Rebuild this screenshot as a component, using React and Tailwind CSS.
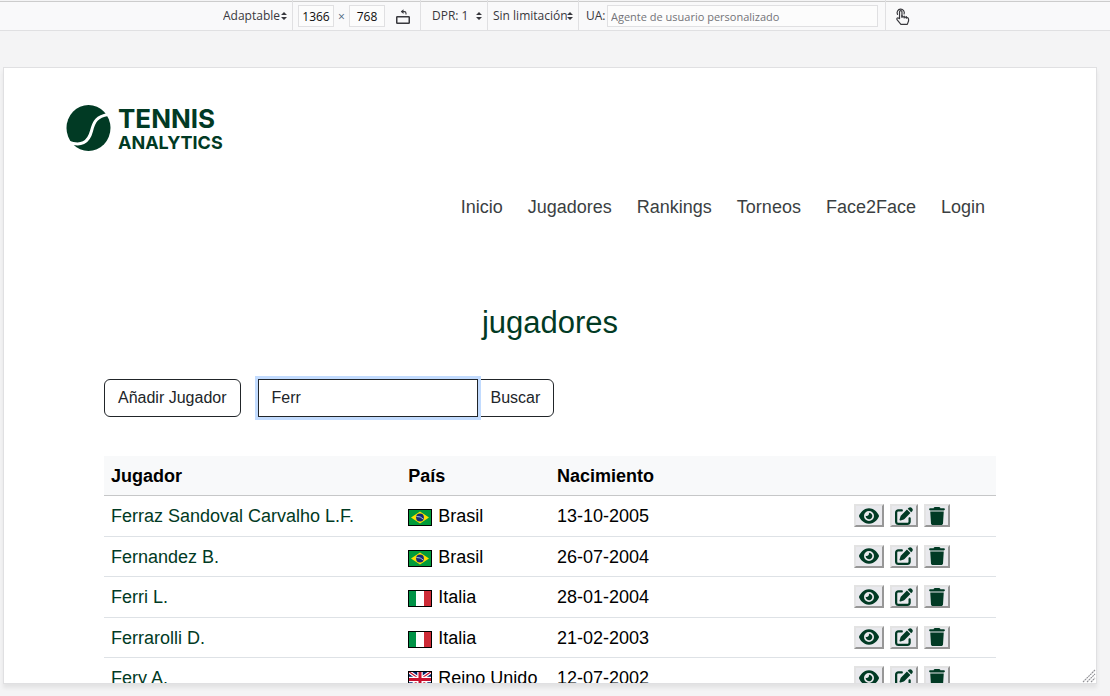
import { useState } from "react";
import { FaEye, FaPenToSquare, FaTrash } from "react-icons/fa6";

const players = [
  { name: "Ferraz Sandoval Carvalho L.F.", country: "Brasil", born: "13-10-2005" },
  { name: "Fernandez B.", country: "Brasil", born: "26-07-2004" },
  { name: "Ferri L.", country: "Italia", born: "28-01-2004" },
  { name: "Ferrarolli D.", country: "Italia", born: "21-02-2003" },
  { name: "Fery A.", country: "Reino Unido", born: "12-07-2002" },
];

const links = ["Inicio", "Jugadores", "Rankings", "Torneos", "Face2Face", "Login"];

function Arrows() {
  return (
    <svg viewBox="0 0 6 8" className="pointer-events-none h-2 w-1.5 shrink-0 fill-[#38383d]" aria-hidden="true">
      <path d="M3 0 6 3H0zM3 8 0 5h6z" />
    </svg>
  );
}

function ToolSelect({ label, options, className }) {
  return (
    <label className={`flex h-full items-center border-r border-[#e0e0e2] pt-[2px] ${className}`}>
      <select aria-label={label} className="min-w-0 flex-1 appearance-none bg-transparent outline-none">
        {options.map((o) => (
          <option key={o}>{o}</option>
        ))}
      </select>
      <Arrows />
    </label>
  );
}

function Toolbar() {
  return (
    <header className="flex h-[31px] shrink-0 items-center border-b border-[#e0e0e2] bg-[#f9f9fa] pl-[223px] font-['Open_Sans','Noto_Sans',sans-serif] text-[12px] text-[#38383d] shadow-[inset_0_1px_0_#f4f4f5,inset_0_2px_0_#cccccc]">
      <ToolSelect label="Dispositivo" options={["Adaptable"]} className="w-[70px] pr-[5px]" />
      <div className="flex h-full items-center border-r border-[#e0e0e2] pt-px pr-[9px] pl-[5px]">
        <input aria-label="Ancho" defaultValue="1366" className="h-[22px] w-9 border border-[#e0e0e2] bg-[#fcfcfc] pt-[2px] text-center text-[#0c0c0d] outline-none" />
        <span className="w-[15px] pt-[2px] text-center text-[#4a6480]">×</span>
        <input aria-label="Alto" defaultValue="768" className="h-[22px] w-9 border border-[#e0e0e2] bg-[#fcfcfc] pt-[2px] text-center text-[#0c0c0d] outline-none" />
        <button type="button" aria-label="Girar" className="ml-[10px] pt-[2px]">
          <svg viewBox="0 0 16 16" className="size-4" fill="none" stroke="#38383d">
            <rect x="1.75" y="7.75" width="12.5" height="6.500" rx="0.6" strokeWidth="1.5" />
            <path d="M11 5.500V4.200Q11 2.600 9.400 2.600H6.500" strokeWidth="1.1" />
            <path d="M8.500 .3 5.800 2.600 8.500 4.900z" fill="#38383d" stroke="none" />
          </svg>
        </button>
      </div>
      <ToolSelect label="Relación de píxeles" options={["DPR: 1"]} className="w-[67px] pr-[5px] pl-[11px]" />
      <ToolSelect label="Limitación de red" options={["Sin limitación"]} className="w-[91px] pr-[5px] pl-[5px]" />
      <label className="flex h-full w-[307px] items-center border-r border-[#e0e0e2] pt-px pr-[7px] pl-[7px]">
        <span className="w-[21px] pt-px">UA:</span>
        <input placeholder="Agente de usuario personalizado" className="h-[22px] min-w-0 flex-1 border border-[#e0e0e2] bg-[#fcfcfc] px-[3px] pt-px outline-none placeholder:text-[11px] placeholder:text-[#737378]" />
      </label>
      <button type="button" aria-label="Simulación táctil" className="ml-[8px] pt-[3px]">
        <svg viewBox="0 0 16 16" className="size-[17px]" fill="none" stroke="#38383d" strokeWidth="1.1" strokeLinecap="round" strokeLinejoin="round">
          <path d="M5.200 10V3.600a1.150 1.150 0 0 1 2.300 0V8l5 1q1.200.3 1.200 1.500v1.700L12.500 15.400H6.500L3 11.200q-.8-1-.1-1.700.8-.7 1.700.2z" />
          <path d="M7.500 6.800V8.900M9.600 7.600V9.300M11.600 8V9.600" />
          <path d="M3.300 6A3.400 3.400 0 1 1 9.500 5.600" />
        </svg>
      </button>
    </header>
  );
}

function Logo() {
  return (
    <a href="#inicio" aria-label="Tennis Analytics" className="flex w-fit items-start gap-[6px] text-[#013a24]">
      <svg viewBox="0 0 46 48" className="h-12 w-[46px]" aria-hidden="true">
        <ellipse cx="22.500" cy="24" rx="22" ry="23" fill="#013a24" />
        <path d="M2 37.800C15 43 22.500 38.500 25.500 27C28 17 31 12.500 42 10.500" fill="none" stroke="#fff" strokeWidth="3" />
      </svg>
      <span className="flex flex-col pt-[3px] font-['Inter',sans-serif] font-bold">
        <span className="text-[26px] leading-[24px]">TENNIS</span>
        <span className="text-[18px] leading-[24px]">ANALYTICS</span>
      </span>
    </a>
  );
}

function Flag({ country }) {
  return (
    <svg viewBox="0 0 24 17" className="mt-0.5 h-[17px] w-6 shrink-0" role="img" aria-label={`Bandera de ${country}`}>
      {country === "Brasil" && (
        <>
          <rect width="24" height="17" fill="#009b3a" />
          <path d="M12 2.500 21 8.500 12 14.500 3 8.500z" fill="#fedf00" />
          <circle cx="12" cy="8.500" r="3.900" fill="#152a76" />
          <path d="M8.500 7.500q4-.4 6.800 2.600" stroke="#b9c9dd" strokeWidth=".9" fill="none" />
        </>
      )}
      {country === "Italia" && (
        <>
          <rect width="24" height="17" fill="#fff" />
          <rect width="8" height="17" fill="#009246" />
          <rect x="16" width="8" height="17" fill="#ce2b37" />
        </>
      )}
      {country === "Reino Unido" && (
        <>
          <rect width="24" height="17" fill="#012169" />
          <path d="M0 0 24 17M24 0 0 17" stroke="#fff" strokeWidth="3.500" />
          <path d="M0 0 24 17M24 0 0 17" stroke="#c8102e" strokeWidth="1.200" />
          <path d="M12 0V17M0 8.500H24" stroke="#fff" strokeWidth="5.500" />
          <path d="M12 0V17M0 8.500H24" stroke="#c8102e" strokeWidth="3" />
        </>
      )}
      <rect x=".5" y=".5" width="23" height="16" fill="none" stroke="#000" />
    </svg>
  );
}

function Action({ label, children }) {
  return (
    <button type="button" aria-label={label} className="flex h-[23px] items-center border-2 border-t-[#e3e3e3] border-r-[#979797] border-b-[#979797] border-l-[#e3e3e3] bg-[#e9e9ed] px-[3px]">
      {children}
    </button>
  );
}

export default function App() {
  const [query, setQuery] = useState("Ferr");
  return (
    <div className="flex h-screen flex-col overflow-hidden bg-[#f4f4f5]">
      <Toolbar />
      <div className="relative mt-9 mr-[13px] mb-3 ml-[3px] min-h-0 flex-1 overflow-hidden border border-[#e0e0e2] bg-white font-['Liberation_Sans',Arial,sans-serif] shadow-[0_4px_4px_#00000012]">
        <div className="px-[62px] pt-[36px]">
          <Logo />
        </div>
        <nav className="mt-[39px] flex justify-end gap-[25px] pr-[111px] text-[18px] leading-[27px] text-[#3b3f42]">
          {links.map((l) => (
            <a key={l} href={`#${l.toLowerCase()}`}>{l}</a>
          ))}
        </nav>
        <main className="px-[100px]">
          <h1 className="mt-[83px] text-center text-[31px] leading-[37px] text-[#013a24]">jugadores</h1>
          <div className="mt-[38px] flex text-[16px] leading-6 text-[#212529]">
            <button type="button" className="mr-[17px] h-[38px] rounded-md border border-[#212529] px-[13px]">Añadir Jugador</button>
            <input
              aria-label="Buscar jugador"
              value={query}
              onChange={(e) => setQuery(e.target.value)}
              className="relative z-10 h-[38px] w-[220px] border border-[#212529] bg-white px-[13px] ring-3 ring-[#c2dbfe] outline-none"
            />
            <button type="button" className="-ml-px h-[38px] rounded-r-md border border-[#212529] px-[13px]">Buscar</button>
          </div>
          <table className="mt-[39px] w-full table-fixed border-collapse text-left text-[18px] leading-[27px] text-black">
            <thead>
              <tr className="h-[39px] border-b border-[#c6c7c8] bg-[#f8f9fa]">
                <th scope="col" className="w-2/6 px-[7px] pt-[2px] pb-0">Jugador</th>
                <th scope="col" className="w-1/6 px-[7px] pt-[2px] pb-0">País</th>
                <th scope="col" className="w-2/6 px-[7px] pt-[2px] pb-0">Nacimiento</th>
                <th scope="col" aria-label="Acciones" className="w-1/6 px-[7px] py-0" />
              </tr>
            </thead>
            <tbody>
              {players.map((p) => (
                <tr key={p.name} className="border-b border-[#dee2e6] odd:h-[41px] even:h-10">
                  <td className="px-[7px] pt-[2px] pb-0">
                    <a href="#jugador" className="text-[#013a24]">{p.name}</a>
                  </td>
                  <td className="px-[7px] pt-[2px] pb-0">
                    <div className="flex items-center gap-[6px] whitespace-nowrap">
                      <Flag country={p.country} />
                      {p.country}
                    </div>
                  </td>
                  <td className="px-[7px] pt-[2px] pb-0">{p.born}</td>
                  <td className="px-[7px] py-0">
                    <div className="flex gap-[6px] text-[#013a24]">
                      <Action label="Ver"><FaEye className="h-[18px] w-5" /></Action>
                      <Action label="Editar"><FaPenToSquare className="size-[18px]" /></Action>
                      <Action label="Eliminar"><FaTrash className="h-[18px] w-4" /></Action>
                    </div>
                  </td>
                </tr>
              ))}
            </tbody>
          </table>
        </main>
        <svg viewBox="0 0 14 14" className="absolute right-0 bottom-0 size-[14px]" stroke="#8f8f94" strokeWidth="1.100" aria-hidden="true">
          <path d="M1 13 13 1M5 13 13 5M9 13 13 9" strokeDasharray="2 .5" />
        </svg>
      </div>
    </div>
  );
}
